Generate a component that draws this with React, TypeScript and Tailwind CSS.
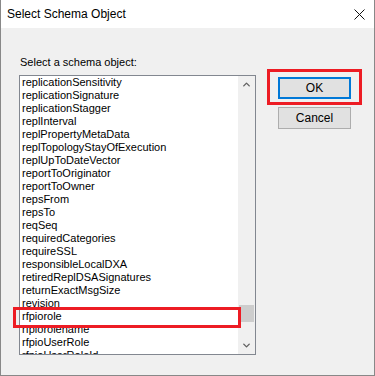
import { ChevronDown, ChevronUp } from 'lucide-react';

const items = [
  'replicationSensitivity',
  'replicationSignature',
  'replicationStagger',
  'replInterval',
  'replPropertyMetaData',
  'replTopologyStayOfExecution',
  'replUpToDateVector',
  'reportToOriginator',
  'reportToOwner',
  'repsFrom',
  'repsTo',
  'reqSeq',
  'requiredCategories',
  'requireSSL',
  'responsibleLocalDXA',
  'retiredReplDSASignatures',
  'returnExactMsgSize',
  'revision',
  'rfpiorole',
  'rfpiorolename',
  'rfpioUserRole',
  'rfpioUserRoleId',
];

export default function App() {
  return (
    <div
      className="flex h-[376px] w-[375px] flex-col border-x border-b border-[#888888] bg-[#f0f0f0] text-black"
      style={{ fontFamily: '"Liberation Sans", Arial, sans-serif' }}
    >
      {/* Title bar */}
      <div className="flex h-[28px] shrink-0 items-center justify-between bg-white pl-[6px] pr-[8px]">
        <span className="text-[12px]">Select Schema Object</span>
        <svg width="11" height="11" viewBox="0 0 11 11" className="mr-[1px]">
          <path d="M0.5 0.5 L10.5 10.5 M10.5 0.5 L0.5 10.5" stroke="#111" strokeWidth="1" fill="none" />
        </svg>
      </div>

      {/* Body */}
      <div className="flex flex-1 pl-[18px] pt-[28px]">
        <div className="flex flex-col">
          <div className="h-[19px] pl-[1px] text-[11px] leading-[13px]">Select a schema object:</div>
          <div className="relative h-[280px] w-[237px] border border-[#828790] bg-white">
            <div className="flex h-full">
              <div className="flex-1 overflow-hidden pl-[2px] text-[11px] leading-[13px]">
                {items.map((it) => (
                  <div key={it} className="h-[13px] whitespace-nowrap">
                    {it}
                  </div>
                ))}
              </div>
              <div className="flex w-[17px] flex-col items-center bg-[#f0f0f0]">
                <div className="flex h-[17px] items-center justify-center">
                  <ChevronUp size={11} strokeWidth={3} color="#606060" />
                </div>
                <div className="flex w-full flex-1 flex-col">
                  <div className="h-[212px]" />
                  <div className="h-[17px] w-[15px] self-center bg-[#cdcdcd]" />
                </div>
                <div className="flex h-[17px] items-center justify-center">
                  <ChevronDown size={11} strokeWidth={3} color="#606060" />
                </div>
              </div>
            </div>
            {/* highlight on rfpiorole */}
            <div className="pointer-events-none absolute left-[-7px] top-[231px] h-[21px] w-[228px] border-[3px] border-[#ed1c24]" />
          </div>
        </div>

        <div className="ml-[22px] mt-[21px] flex flex-col gap-[8px]">
          <div className="relative">
            <button className="block h-[22px] w-[73px] border-2 border-[#0078d7] bg-[#e1e1e1] text-[12px]">OK</button>
            <div className="pointer-events-none absolute bottom-[-6px] left-[-11px] right-[-11px] top-[-8px] border-[3px] border-[#ed1c24]" />
          </div>
          <button className="block h-[22px] w-[73px] border border-[#adadad] bg-[#e1e1e1] text-[12px]">Cancel</button>
        </div>
      </div>
    </div>
  );
}
